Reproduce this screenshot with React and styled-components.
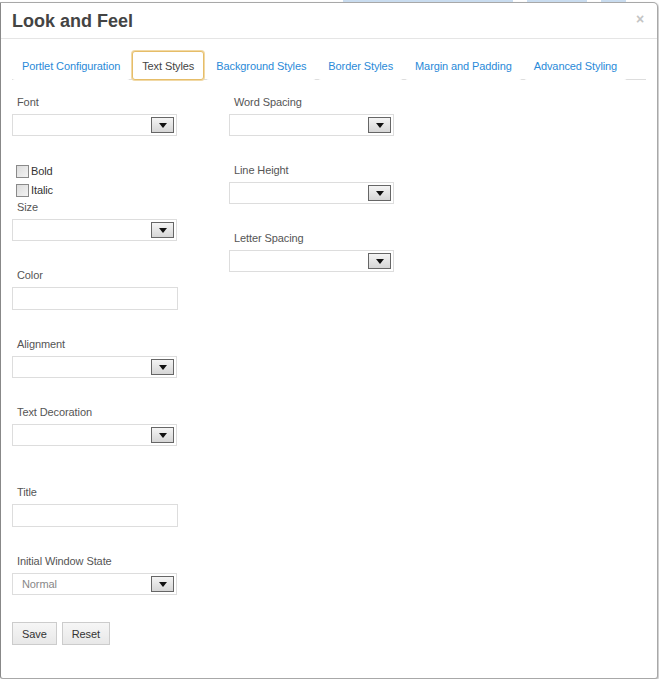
import React from "react";
import styled, { createGlobalStyle } from "styled-components";

const GlobalStyle = createGlobalStyle`
  html, body {
    margin: 0;
    padding: 0;
    background: #fff;
    font-family: "Liberation Sans", Arial, sans-serif;
  }
`;

const Backdrop = styled.div`
  display: flex;
  height: 2px;
  padding-left: 343px;
  gap: 14px;
`;
const BackdropBlock = styled.div`
  width: ${(p) => p.w}px;
  height: 2px;
  background: #c9dcef;
`;

const Dialog = styled.div`
  box-sizing: border-box;
  width: 658px;
  height: 677px;
  border: 1px solid #a8a8a8;
  border-left-color: #888;
  border-radius: 0 5px 3px 3px;
  background: #fff;
  box-shadow: 1px 1px 2px rgba(0, 0, 0, 0.25);
  display: flex;
  flex-direction: column;
  letter-spacing: -0.1px;
`;

const Header = styled.div`
  height: 35px;
  display: flex;
  align-items: center;
  justify-content: space-between;
  padding: 0 13px 0 11px;
  border-bottom: 1px solid #e5e5e5;
`;
const Title = styled.h3`
  margin: 1px 0 0;
  font-size: 18px;
  font-weight: bold;
  color: #444;
  letter-spacing: 0;
`;
const Close = styled.span`
  font-size: 14px;
  color: #c4c4c4;
  font-weight: bold;
  line-height: 1;
  margin-top: -4px;
`;

const Body = styled.div`
  padding: 12px 11px 0 11px;
`;

const Tabs = styled.ul`
  list-style: none;
  margin: 0;
  padding: 0;
  display: flex;
  gap: 2px;
  border-bottom: 1px solid #ddd;
`;
const Tab = styled.li`
  box-sizing: border-box;
  flex: 0 0 auto;
  white-space: nowrap;
  height: 29px;
  padding: 0 9px;
  display: flex;
  align-items: center;
  font-size: 11px;
  color: ${(p) => (p.active ? "#444" : "#2a8ad8")};
  border: 1px solid ${(p) => (p.active ? "#e6bd68" : "transparent")};
  box-shadow: ${(p) => (p.active ? "0 0 0 1px #f1d9a6" : "none")};
  border-radius: 3px;
  margin-bottom: -1px;
  background: #fff;
`;

const Form = styled.div`
  display: flex;
  gap: 51px;
  padding-top: 15px;
`;
const Column = styled.div`
  width: 166px;
  display: flex;
  flex-direction: column;
`;

const Field = styled.div`
  margin-top: ${(p) => p.extra || 0}px;
  margin-bottom: 27px;
`;
const Label = styled.div`
  font-size: 11px;
  line-height: 14px;
  color: #555;
  padding-left: 5px;
  margin-bottom: 5px;
`;

const SelectBox = styled.div`
  box-sizing: border-box;
  height: 22px;
  width: 165px;
  border: 1px solid #ddd;
  background: #fff;
  display: flex;
  align-items: center;
  justify-content: space-between;
  padding: 0 2px 0 9px;
  font-size: 11px;
  color: #888;
`;
const Arrow = styled.span`
  box-sizing: border-box;
  width: 23px;
  height: 16px;
  border: 1px solid #666;
  background: linear-gradient(#f4f4f4, #d6d6d6);
  display: flex;
  align-items: center;
  justify-content: center;
  &::after {
    content: "";
    border-left: 4px solid transparent;
    border-right: 4px solid transparent;
    border-top: 5px solid #111;
  }
`;

const TextInput = styled.div`
  box-sizing: border-box;
  height: 23px;
  width: 166px;
  border: 1px solid #ddd;
  background: #fff;
`;

const Checks = styled.div`
  margin-top: -2px;
  margin-bottom: 1px;
`;
const CheckRow = styled.label`
  display: flex;
  align-items: center;
  height: 19px;
  padding-left: 4px;
  font-size: 11px;
  color: #333;
`;
const Box = styled.span`
  box-sizing: border-box;
  width: 13px;
  height: 13px;
  border: 1px solid #8a8a8a;
  background: linear-gradient(135deg, #dcdcdc, #f4f4f4);
  margin-right: 2px;
  margin-top: 2px;
`;

const Buttons = styled.div`
  display: flex;
  gap: 5px;
`;
const Button = styled.button`
  box-sizing: border-box;
  height: 23px;
  padding: 0 9px;
  font-family: inherit;
  font-size: 11px;
  letter-spacing: inherit;
  color: #333;
  background: linear-gradient(#f6f6f6, #e8e8e8);
  border: 1px solid #ccc;
  border-radius: 0;
`;

const Select = ({ label, value, extra }) => (
  <Field extra={extra}>
    <Label>{label}</Label>
    <SelectBox>
      <span>{value}</span>
      <Arrow />
    </SelectBox>
  </Field>
);

const Input = ({ label, extra }) => (
  <Field extra={extra}>
    <Label>{label}</Label>
    <TextInput />
  </Field>
);

const tabs = [
  "Portlet Configuration",
  "Text Styles",
  "Background Styles",
  "Border Styles",
  "Margin and Padding",
  "Advanced Styling",
];

export default function App() {
  return (
    <>
      <GlobalStyle />
      <Backdrop>
        <BackdropBlock w={170} />
        <BackdropBlock w={60} />
        <BackdropBlock w={25} />
      </Backdrop>
      <Dialog>
        <Header>
          <Title>Look and Feel</Title>
          <Close>×</Close>
        </Header>
        <Body>
          <Tabs>
            {tabs.map((t) => (
              <Tab key={t} active={t === "Text Styles"}>
                {t}
              </Tab>
            ))}
          </Tabs>
          <Form>
            <Column>
              <Select label="Font" />
              <Checks>
                <CheckRow>
                  <Box />
                  Bold
                </CheckRow>
                <CheckRow>
                  <Box />
                  Italic
                </CheckRow>
              </Checks>
              <Select label="Size" />
              <Input label="Color" />
              <Select label="Alignment" />
              <Select label="Text Decoration" />
              <Input label="Title" extra={12} />
              <Select label="Initial Window State" value="Normal" />
              <Buttons>
                <Button>Save</Button>
                <Button>Reset</Button>
              </Buttons>
            </Column>
            <Column>
              <Select label="Word Spacing" />
              <Select label="Line Height" />
              <Select label="Letter Spacing" />
            </Column>
          </Form>
        </Body>
      </Dialog>
    </>
  );
}
